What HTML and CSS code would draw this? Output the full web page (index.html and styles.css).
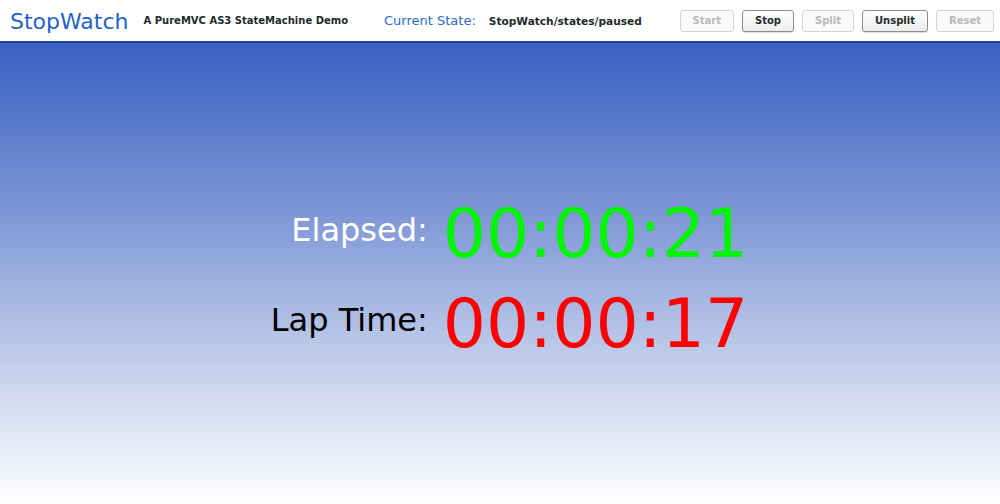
FILE: index.html
```html
<!DOCTYPE html>
<html lang="en">
<head>
  <meta charset="UTF-8">
  <title>StopWatch</title>
  <link rel="stylesheet" href="styles.css">
</head>
<body>
  <div class="app-bar">
    <span class="app-title">StopWatch</span>
    <span class="app-subtitle">A PureMVC AS3 StateMachine Demo</span>
    <span class="state-label">Current State:</span>
    <span class="state-value">StopWatch/states/paused</span>
    <div class="controls">
      <button class="ctl" disabled>Start</button>
      <button class="ctl">Stop</button>
      <button class="ctl" disabled>Split</button>
      <button class="ctl">Unsplit</button>
      <button class="ctl" disabled>Reset</button>
    </div>
  </div>

  <div class="stage">
    <div class="readout">
      <span class="readout-label elapsed">Elapsed:</span>
      <span class="readout-time green">00:00:21</span>
      <span class="readout-label lap">Lap Time:</span>
      <span class="readout-time red">00:00:17</span>
    </div>
  </div>
</body>
</html>
```

FILE: styles.css
```css
/* General styling */
html, body {
  height: 100%;
}

body {
  margin: 0;
  font-family: "DejaVu Sans", Verdana, sans-serif;
  display: flex;
  flex-direction: column;
  overflow: hidden;
}

.app-bar {
  height: 41px;
  flex-shrink: 0;
  background: #fff;
  border-bottom: 2px solid #24469a;
  display: flex;
  align-items: center;
  padding-left: 10px;
  box-sizing: content-box;
}

.app-title {
  font-size: 22px;
  color: #1f63c6;
  margin-right: 15px;
  position: relative;
  top: 1px;
}

.app-subtitle {
  font-size: 10px;
  font-weight: bold;
  color: #1e2a2a;
  margin-right: 36px;
}

.state-label {
  font-size: 13px;
  color: #2a6cc8;
  margin-right: 13px;
}

.state-value {
  font-size: 10.6px;
  font-weight: bold;
  color: #1e2a2a;
}

.controls {
  margin-left: auto;
  margin-right: 6px;
  display: flex;
  gap: 8px;
}

.ctl {
  height: 22px;
  padding: 0 12px;
  font-family: "DejaVu Sans", Verdana, sans-serif;
  font-size: 10px;
  font-weight: bold;
  color: #1e2a2a;
  background: linear-gradient(#ffffff, #ececec);
  border: 1px solid #8c8c8c;
  border-radius: 3px;
  box-shadow: 0 1px 1px rgba(0, 0, 0, 0.15);
}

.ctl:disabled {
  color: #b8b8b8;
  border-color: #d4d4d4;
  background: #fafafa;
  box-shadow: none;
}

.stage {
  flex: 1;
  background: linear-gradient(#3961c2 0%, #7a93d4 35%, #b9c7e8 65%, #ffffff 100%);
  display: flex;
  justify-content: center;
  align-items: center;
}

.readout {
  display: grid;
  grid-template-columns: auto auto;
  column-gap: 15px;
  row-gap: 4px;
  align-items: center;
  margin-top: 10px;
  margin-left: 19px;
}

.readout-label {
  font-size: 32px;
  text-align: right;
  padding-bottom: 8px;
}

.elapsed {
  color: #fff;
}

.lap {
  color: #000;
}

.readout-time {
  font-size: 68px;
  line-height: 86px;
}

.green {
  color: #00f500;
}

.red {
  color: #ff0000;
}
```
